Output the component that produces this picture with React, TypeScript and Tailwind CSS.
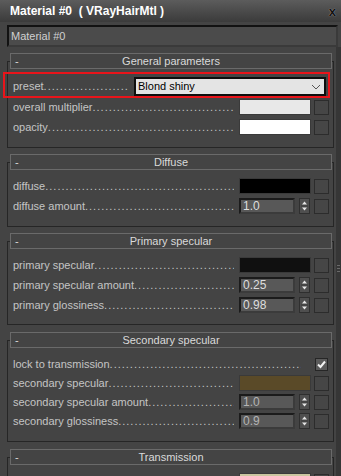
import React from 'react';

const DOTS = '.'.repeat(120);

const Leader = ({ label }: { label: string }) => (
    <div className="flex flex-1 min-w-0 items-center overflow-hidden whitespace-nowrap text-[11px] leading-[16px] text-[#c4c4c4]">
        <span>{label}</span>
        <span className="flex-1 overflow-hidden tracking-[1px]">{DOTS}</span>
    </div>
);

const MapButton = () => (
    <div className="ml-[3px] h-[15px] w-[15px] border border-[#2c2c2c] bg-[#464646]" />
);

const SwatchRow = ({ label, color }: { label: string; color: string }) => (
    <div className="flex h-[16px] items-center">
        <Leader label={label} />
        <div className="ml-[5px] flex items-center">
            <div className={`h-[16px] w-[72px] border border-[#3a3a3a] ${color}`} />
            <MapButton />
        </div>
    </div>
);

const Arrows = () => (
    <div className="ml-[4px] flex h-[16px] w-[11px] flex-col border border-[#2f2f2f] bg-[#4f4f4f]">
        <svg viewBox="0 0 9 14" className="h-full w-full">
            <path d="M2 5.5 L4.5 2.5 L7 5.5 Z" fill="#e6e6e6" />
            <line x1="1" y1="7" x2="8" y2="7" stroke="#3a3a3a" strokeWidth="1" />
            <path d="M2 8.5 L4.5 11.5 L7 8.5 Z" fill="#e6e6e6" />
        </svg>
    </div>
);

const SpinnerRow = ({ label, value, dim }: { label: string; value: string; dim?: boolean }) => (
    <div className="flex h-[16px] items-center">
        <Leader label={label} />
        <div className="ml-[5px] flex items-center">
            <div
                className={`flex h-[16px] w-[56px] items-center border-2 border-t-[#1b1b1b] border-l-[#1b1b1b] border-r-[#3b3b3b] border-b-[#3b3b3b] bg-[#585858] pl-[2px] text-[12px] ${
                    dim ? 'text-[#b4b4b4]' : 'text-[#dedede]'
                }`}
            >
                {value}
            </div>
            <Arrows />
            <div className="ml-[4px] h-[15px] w-[15px] border border-[#2c2c2c] bg-[#464646]" />
        </div>
    </div>
);

const CheckRow = ({ label }: { label: string }) => (
    <div className="flex h-[16px] items-center">
        <Leader label={label} />
        <div className="ml-[14px] mr-[1px] flex h-[13px] w-[13px] items-center justify-center border border-[#262626] bg-[#5a5a5a]">
            <svg viewBox="0 0 11 11" className="h-[11px] w-[11px]">
                <path d="M2 5.5 L4.5 8 L9 2.5" fill="none" stroke="#f2f2f2" strokeWidth="2" />
            </svg>
        </div>
    </div>
);

const Rollout = ({
    title,
    children,
    className = '',
    bodyClass = 'gap-[4px] pb-[12px]',
}: {
    title: string;
    children: React.ReactNode;
    className?: string;
    bodyClass?: string;
}) => (
    <div className={`ml-[7px] mr-[2px] border border-[#262626] ${className}`}>
        <div className="-mt-[9px] ml-[2px] mr-[1px] flex h-[16px] items-center border border-[#6a6a6a] bg-[#444444] text-[11px] text-[#dadada]">
            <span className="w-[14px] pl-[4px] leading-none">-</span>
            <span className="flex-1 pr-[14px] text-center">{title}</span>
        </div>
        <div className={`flex flex-col pl-[5px] pr-[4px] pt-[8px] ${bodyClass}`}>{children}</div>
    </div>
);

export default function App() {
    return (
        <div className="h-[476px] w-[341px] overflow-hidden bg-[#444444] font-['Liberation_Sans',Arial,sans-serif]">
            <div className="flex h-[22px] items-center justify-between bg-gradient-to-b from-[#5c5c5c] to-[#3b3b3b] pl-[10px] pr-[5px]">
                <span className="whitespace-pre text-[12px] font-bold text-white">Material #0  ( VRayHairMtl )</span>
                <span className="text-[13px] font-bold leading-none text-[#111] [text-shadow:0_0_1px_#bbb]">x</span>
            </div>
            <div className="ml-[7px] mt-[3px] flex h-[22px] w-[331px] items-center border-2 border-t-[#121212] border-l-[#121212] border-r-[#3a3a3a] border-b-[#3a3a3a] bg-[#4b4b4b] pl-[2px] text-[11px] text-[#d0d0d0]">
                Material #0
            </div>
            <div className="flex">
                <div className="w-[336px]">
                    <Rollout title="General parameters" className="mt-[14px]" bodyClass="pb-[12px]">
                        <div className="relative flex h-[19px] items-center">
                            <div className="pointer-events-none absolute -left-[10px] -right-[1px] -top-[5px] -bottom-[2px] border-2 border-[#e8141a]" />
                            <div className="flex w-[116px] items-center overflow-hidden whitespace-nowrap text-[11px] text-[#c4c4c4]">
                                <span>preset</span>
                                <span className="flex-1 overflow-hidden tracking-[1px]">{DOTS}</span>
                            </div>
                            <div className="ml-[5px] flex h-[19px] w-[192px] items-center justify-between border-2 border-[#0e0e0e] bg-[#e4e4e4] pl-[2px] pr-[3px] text-[11px] text-black">
                                <span>Blond shiny</span>
                                <svg viewBox="0 0 10 6" className="h-[6px] w-[10px]">
                                    <path d="M1 1 L5 5 L9 1" fill="none" stroke="#555" strokeWidth="1" />
                                </svg>
                            </div>
                        </div>
                        <div className="mt-[3px]">
                            <SwatchRow label="overall multiplier" color="bg-[#e8e8e8]" />
                        </div>
                        <div className="mt-[4px]">
                            <SwatchRow label="opacity" color="bg-white" />
                        </div>
                    </Rollout>

                    <Rollout title="Diffuse" className="mt-[14px]">
                        <SwatchRow label="diffuse" color="bg-black" />
                        <SpinnerRow label="diffuse amount" value="1.0" />
                    </Rollout>

                    <Rollout title="Primary specular" className="mt-[14px]" bodyClass="gap-[4px] pb-[11px]">
                        <SwatchRow label="primary specular" color="bg-[#101010]" />
                        <SpinnerRow label="primary specular amount" value="0.25" />
                        <SpinnerRow label="primary glossiness" value="0.98" />
                    </Rollout>

                    <Rollout title="Secondary specular" className="mt-[15px]" bodyClass="gap-[3px] pb-[12px]">
                        <CheckRow label="lock to transmission" />
                        <SwatchRow label="secondary specular" color="bg-[#5a4a28]" />
                        <SpinnerRow label="secondary specular amount" value="1.0" dim />
                        <SpinnerRow label="secondary glossiness" value="0.9" dim />
                    </Rollout>

                    <Rollout title="Transmission" className="mt-[15px]">
                        <SwatchRow label="transmission" color="bg-[#c9c59f]" />
                        <SpinnerRow label="transmission amount" value="1.0" />
                    </Rollout>
                </div>
                <div className="flex w-[5px] flex-col bg-[#363636]">
                    <div className="mt-[218px] flex flex-col items-center gap-[2px]">
                        <div className="h-px w-[3px] bg-[#6a6a6a]" />
                        <div className="h-px w-[3px] bg-[#6a6a6a]" />
                        <div className="h-px w-[3px] bg-[#6a6a6a]" />
                    </div>
                </div>
            </div>
        </div>
    );
}
